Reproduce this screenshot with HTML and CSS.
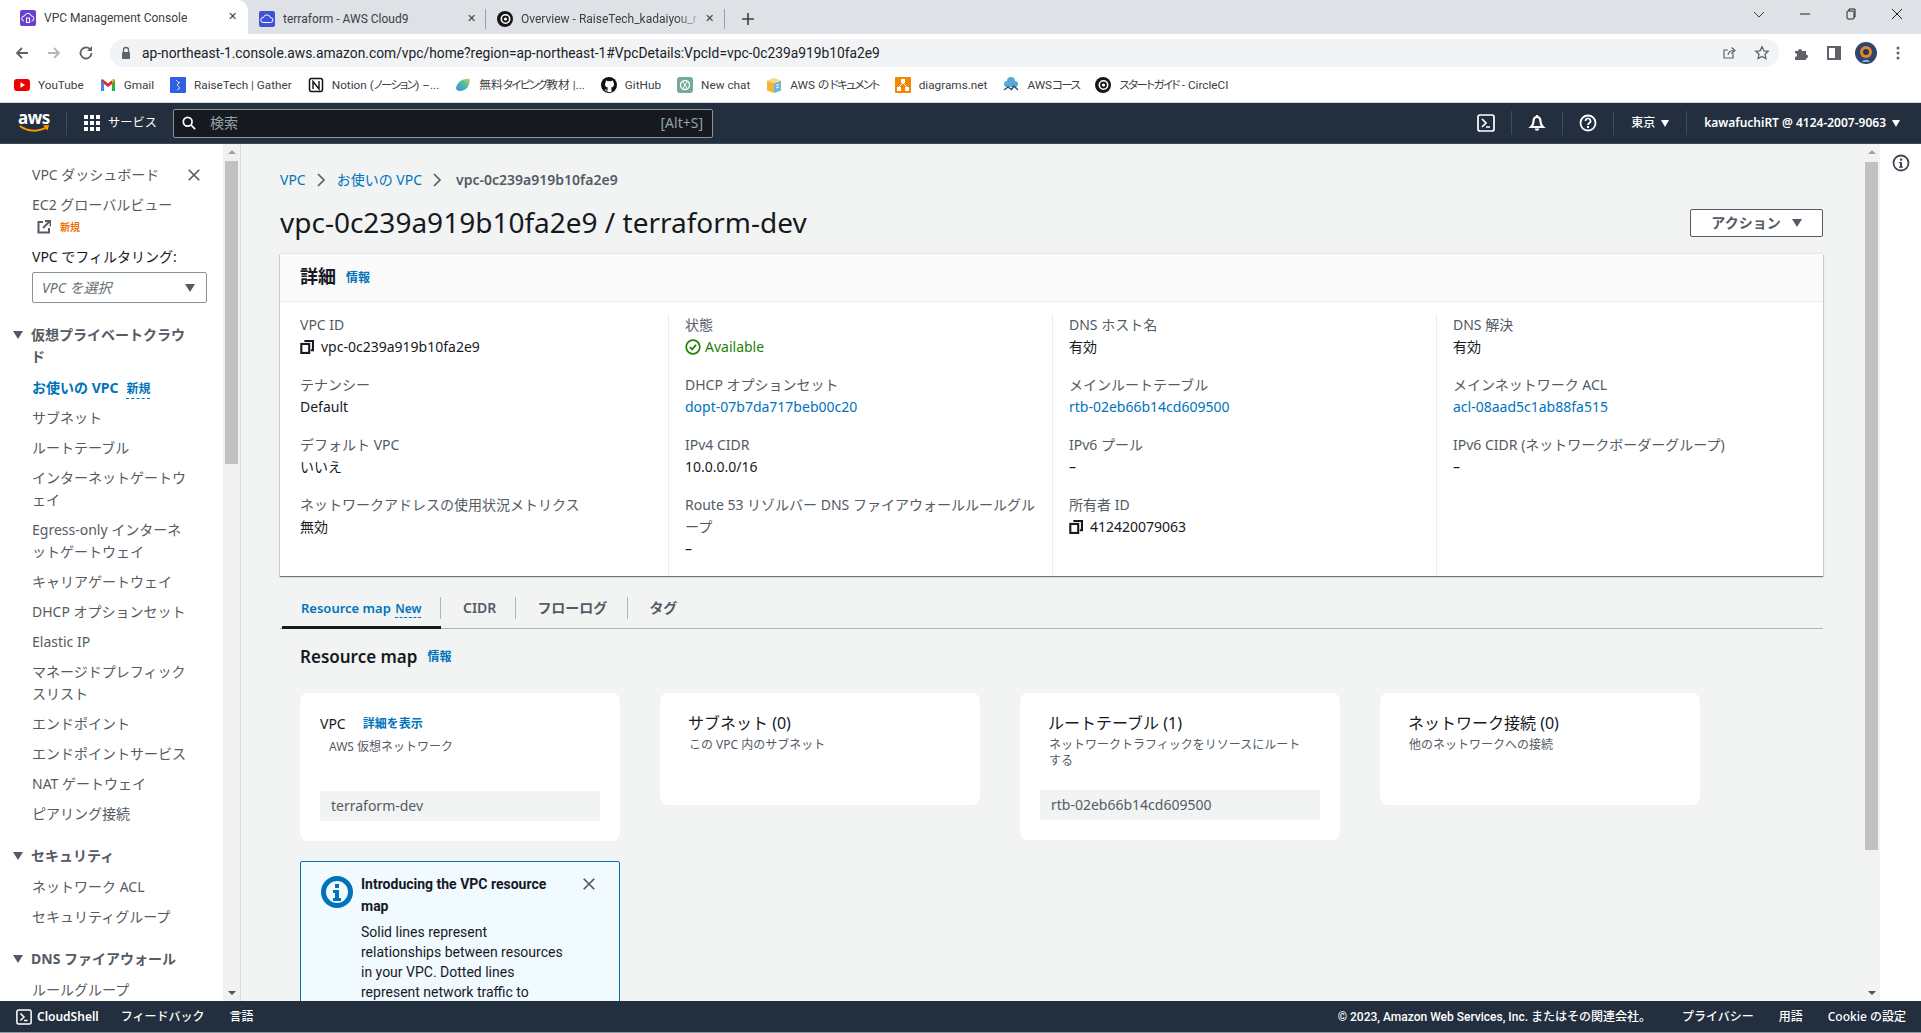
FILE: index.html
```html
<!DOCTYPE html>
<html lang="ja">
<head>
<meta charset="utf-8">
<title>VPC Management Console</title>
<link rel="stylesheet" href="styles.css">
</head>
<body>
<svg class="defs" width="0" height="0" aria-hidden="true">
  <symbol id="copy" viewBox="0 0 16 16"><path d="M5 1.200h9.800v10.500h-2.500" fill="none" stroke="currentColor" stroke-width="2.400"/><rect x="1.500" y="4.500" width="9" height="10.300" fill="none" stroke="currentColor" stroke-width="2.400"/></symbol>
  <symbol id="shell" viewBox="0 0 18 18"><rect x="1" y="1" width="16" height="16" rx="2" fill="none" stroke="currentColor" stroke-width="1.700"/><path d="M5 5l4 4-4 4M9 13h4" fill="none" stroke="currentColor" stroke-width="1.700"/></symbol>
  <symbol id="x" viewBox="0 0 16 16"><path d="M2 2l12 12M14 2L2 14" fill="none" stroke="currentColor" stroke-width="2"/></symbol>
</svg>
<div class="tabstrip">
  <div class="tab tab-active">
    <svg class="fav" viewBox="0 0 16 16"><rect width="16" height="16" rx="2" fill="#6a3fd0"/><path d="M4 11a2.500 2.500 0 0 1 .5-5 3.500 3.500 0 0 1 6.800 0 2.500 2.500 0 0 1 .2 5" fill="none" stroke="#fff"/><rect x="6.500" y="8" width="3" height="4.500" fill="none" stroke="#fff"/></svg>
    <span class="tab-title">VPC Management Console</span><span class="tab-x">✕</span>
  </div>
  <div class="tab tab-second">
    <svg class="fav" viewBox="0 0 16 16"><rect width="16" height="16" rx="2" fill="#3f51d6"/><path d="M4 11.500a2.500 2.500 0 0 1 .5-5 3.500 3.500 0 0 1 6.800 0 2.500 2.500 0 0 1 .2 5z" fill="none" stroke="#fff"/></svg>
    <span class="tab-title">terraform - AWS Cloud9</span><span class="tab-x">✕</span>
  </div>
  <div class="tab tab-third">
    <svg class="fav" viewBox="0 0 16 16"><circle cx="8" cy="8" r="8" fill="#161616"/><circle cx="8.500" cy="8" r="4.200" fill="none" stroke="#fff" stroke-width="1.600"/><circle cx="8.500" cy="8" r="1.600" fill="#fff"/></svg>
    <span class="tab-title tab-fade">Overview - RaiseTech_kadaiyou_r</span><span class="tab-x">✕</span>
  </div>
  <svg class="tab-plus" viewBox="0 0 14 14"><path d="M7 1v12M1 7h12" stroke="#3c4043" stroke-width="1.600"/></svg>
  <div class="winctl">
    <svg viewBox="0 0 12 12"><path d="M1 4l5 5 5-5" fill="none" stroke="#3c4043"/></svg>
    <svg viewBox="0 0 12 12"><path d="M1 6h10" stroke="#202124"/></svg>
    <svg viewBox="0 0 12 12"><rect x="2" y="3" width="7" height="8" rx="1" fill="none" stroke="#202124"/><path d="M4 3V1h6v8H9" fill="none" stroke="#202124"/></svg>
    <svg viewBox="0 0 12 12"><path d="M1 1l10 10M11 1L1 11" stroke="#202124"/></svg>
  </div>
</div>
<div class="toolbar">
  <svg class="tb-ic" viewBox="0 0 16 16"><path d="M14 8H3M8 3L3 8l5 5" fill="none" stroke="#5f6368" stroke-width="1.800"/></svg>
  <svg class="tb-ic" viewBox="0 0 16 16"><path d="M2 8h11M8 3l5 5-5 5" fill="none" stroke="#b4b7bb" stroke-width="1.800"/></svg>
  <svg class="tb-ic" viewBox="0 0 16 16"><path d="M13.500 8A5.500 5.500 0 1 1 12 4.200" fill="none" stroke="#5f6368" stroke-width="1.800"/><path d="M14 1v5H9z" fill="#5f6368"/></svg>
  <div class="urlbar">
    <svg class="lock" viewBox="0 0 12 14"><path d="M3.500 6V4a2.500 2.500 0 0 1 5 0v2" fill="none" stroke="#5f6368" stroke-width="1.300"/><rect x="2" y="6" width="8" height="7" rx="1" fill="#5f6368"/></svg>
    <span class="url">ap-northeast-1.console.aws.amazon.com/vpc/home?region=ap-northeast-1#VpcDetails:VpcId=vpc-0c239a919b10fa2e9</span>
    <svg class="url-ic" viewBox="0 0 16 16"><path d="M11 8.500V13H2V5h4M6 10c.5-3 2.500-4.500 6-4.500M9.500 2.500l3.500 3-3.500 3" fill="none" stroke="#5f6368" stroke-width="1.200"/></svg>
    <svg class="url-ic" viewBox="0 0 16 16"><path d="M8 1.800l1.900 4 4.300.5-3.200 3 .9 4.300L8 11.400l-3.900 2.200.9-4.300-3.200-3 4.300-.5z" fill="none" stroke="#5f6368" stroke-width="1.300"/></svg>
  </div>
  <div class="tb-right">
    <svg class="tb-ic16" viewBox="0 0 16 16"><path d="M1 6h3a2 2 0 1 1 4 0h4v3.500a2 2 0 1 1 0 4V15H1v-3a2 2 0 1 0 0-4z" fill="#5f6368"/></svg>
    <svg class="tb-ic16" viewBox="0 0 16 16"><rect x="2" y="2" width="12" height="12" fill="none" stroke="#5f6368" stroke-width="2"/><rect x="9" y="2" width="5" height="12" fill="#5f6368"/></svg>
    <svg class="avatar" viewBox="0 0 22 22"><circle cx="11" cy="11" r="11" fill="#31456b"/><circle cx="11" cy="10" r="6" fill="#e08a2e"/><circle cx="11" cy="10" r="3" fill="#2b3550"/><path d="M7 20c1-3 7-3 8 0" fill="#7fb2d8"/></svg>
    <svg class="tb-ic16" viewBox="0 0 16 16"><circle cx="8" cy="3" r="1.500" fill="#5f6368"/><circle cx="8" cy="8" r="1.500" fill="#5f6368"/><circle cx="8" cy="13" r="1.500" fill="#5f6368"/></svg>
  </div>
</div>
<div class="bookmarks">
  <span class="bm"><svg viewBox="0 0 16 16"><rect y="2" width="16" height="12" rx="3" fill="#e00"/><path d="M6.500 5.200l4.500 2.800-4.500 2.800z" fill="#fff"/></svg>YouTube</span>
  <span class="bm"><svg viewBox="0 0 16 16"><path d="M1 3v11h3V7l4 3 4-3v7h3V3l-1.500-1L8 6.500 2.500 2z" fill="#d93025"/><path d="M1 3v11h3V6z" fill="#4285f4"/><path d="M15 3v11h-3V6z" fill="#34a853"/><path d="M12 6V3l1.500-1L15 3z" fill="#fbbc04"/></svg>Gmail</span>
  <span class="bm"><svg viewBox="0 0 16 16"><rect width="16" height="16" rx="1" fill="#2f5fe3"/><path d="M6 3l3 3-2 2 3 3-3 2M10 5L7 8" fill="none" stroke="#cfe0ff"/></svg>RaiseTech | Gather</span>
  <span class="bm"><svg viewBox="0 0 16 16"><rect x="1.500" y="1.500" width="13" height="13" rx="2" fill="#fff" stroke="#111" stroke-width="1.500"/><path d="M5 12V4.500l6 7.500V4" fill="none" stroke="#111" stroke-width="1.400"/></svg><span>Notion (<span class="kana">ノーション</span>) –...</span></span>
  <span class="bm"><svg viewBox="0 0 16 16"><defs><linearGradient id="tp" x1="0" y1="1" x2="1" y2="0"><stop offset="0" stop-color="#3a8ede"/><stop offset=".6" stop-color="#4fc0a0"/><stop offset="1" stop-color="#e9c85a"/></linearGradient></defs><path d="M1 11C2 5 8 1 15 2c0 7-4 12-10 12-2 0-4-1-4-3z" fill="url(#tp)"/></svg><span>無料<span class="kana">タイピング</span>教材 |...</span></span>
  <span class="bm"><svg viewBox="0 0 16 16"><circle cx="8" cy="8" r="8" fill="#111"/><path d="M5.500 15v-2.500C3.500 13 3 11.500 2.500 11M10.500 15v-3c0-1-.5-1.500-.5-1.500 2-.2 3-1.200 3-3.200 0-1-.3-1.600-.8-2.100.1-.6 0-1.300-.2-1.700-.7 0-1.400.4-1.900.8a7 7 0 0 0-3.200 0C6.400 3.900 5.700 3.500 5 3.500c-.2.400-.3 1.100-.2 1.700-.5.500-.8 1.100-.8 2.100 0 2 1 3 3 3.200 0 0-.5.500-.5 1.500v3" fill="#fff"/></svg>GitHub</span>
  <span class="bm"><svg viewBox="0 0 16 16"><rect width="16" height="16" rx="3" fill="#74aa9c"/><circle cx="8" cy="8" r="4.500" fill="none" stroke="#fff" stroke-width="1.300"/><path d="M6 5l4 6M10 5l-4 6" stroke="#fff"/></svg>New chat</span>
  <span class="bm"><svg viewBox="0 0 16 16"><path d="M8 1l7 3v9.500L8 16l-7-2.500V4z" fill="#f3b33d"/><path d="M8 1l7 3-7 2.500L1 4z" fill="#fbd98b"/><path d="M8 6.500l7-2.500v9.500L8 16z" fill="#6db6e0"/><path d="M10 8.500l3-1M10 11l3-1" stroke="#fff"/></svg><span>AWS の<span class="kana">ドキュメント</span></span></span>
  <span class="bm"><svg viewBox="0 0 16 16"><rect width="16" height="16" rx="1" fill="#f08705"/><rect x="6" y="2" width="4" height="4" fill="#fff"/><rect x="2" y="10" width="4" height="4" fill="#fff"/><rect x="10" y="10" width="4" height="4" fill="#fff"/><path d="M8 6l-4 4M8 6l4 4" stroke="#fff"/></svg>diagrams.net</span>
  <span class="bm"><svg viewBox="0 0 16 16"><path d="M4 10a3 3 0 0 1 0-6 4 4 0 0 1 8 0 3 3 0 0 1 0 6z" fill="#5aa8d8"/><path d="M1 13l4-3 4 3M8 13l3-4 4 4" stroke="#1f4d78" stroke-width="1.400" fill="none"/></svg><span>AWS<span class="kana">コース</span></span></span>
  <span class="bm"><svg viewBox="0 0 16 16"><circle cx="8" cy="8" r="8" fill="#161616"/><circle cx="8.500" cy="8" r="4.200" fill="none" stroke="#fff" stroke-width="1.600"/><circle cx="8.500" cy="8" r="1.600" fill="#fff"/></svg><span><span class="kana">スタートガイド</span> - CircleCI</span></span>
</div>
<header class="topnav">
  <div class="aws-logo"><span class="aws-word">aws</span><svg viewBox="0 0 32 9"><path d="M2 1c8 6 19 6 27 1" fill="none" stroke="#f90" stroke-width="2"/><path d="M25 .5l6-.5-1.500 5.500z" fill="#f90"/></svg></div>
  <span class="nav-sep nav-sep-logo"></span>
  <svg class="grid-ic" viewBox="0 0 16 16" fill="#fff"><rect width="4" height="4"/><rect x="6" width="4" height="4"/><rect x="12" width="4" height="4"/><rect y="6" width="4" height="4"/><rect x="6" y="6" width="4" height="4"/><rect x="12" y="6" width="4" height="4"/><rect y="12" width="4" height="4"/><rect x="6" y="12" width="4" height="4"/><rect x="12" y="12" width="4" height="4"/></svg>
  <span class="services">サービス</span>
  <div class="search">
    <svg viewBox="0 0 16 16"><circle cx="6.500" cy="6.500" r="5" fill="none" stroke="#fff" stroke-width="2"/><path d="M10 10l5 5" stroke="#fff" stroke-width="2"/></svg>
    <span class="search-ph">検索</span><span class="search-key">[Alt+S]</span>
  </div>
  <div class="nav-right">
    <svg class="nav-ic nav-ic-shell"><use href="#shell"/></svg>
    <span class="nav-sep"></span>
    <svg class="nav-ic" viewBox="0 0 18 18"><path d="M9 1v2" stroke="#fff" stroke-width="2"/><path d="M9 3c-2.500 0-3.500 2-3.500 4.500 0 3-1.200 4.200-2.500 5.500h12c-1.300-1.300-2.500-2.500-2.500-5.500C12.500 5 11.500 3 9 3z" fill="none" stroke="#fff" stroke-width="2.200"/><path d="M6.800 14.500a2.200 2.200 0 0 0 4.400 0z" fill="#fff"/></svg>
    <span class="nav-sep"></span>
    <svg class="nav-ic" viewBox="0 0 18 18"><circle cx="9" cy="9" r="7.500" fill="none" stroke="#fff" stroke-width="1.800"/><path d="M6.500 7a2.500 2.500 0 1 1 3.500 2.300c-.7.400-1 .8-1 1.700" fill="none" stroke="#fff" stroke-width="1.700"/><rect x="8" y="12" width="2" height="2" fill="#fff"/></svg>
    <span class="nav-sep"></span>
    <span class="nav-region">東京<i class="caret-w"></i></span>
    <span class="nav-sep"></span>
    <span class="nav-user">kawafuchiRT @ 4124-2007-9063<i class="caret-w"></i></span>
  </div>
</header>
<div class="workspace">
  <aside class="sidebar">
    <nav class="sidenav">
      <div class="side-top"><a class="side-item">VPC ダッシュボード</a><svg class="side-close"><use href="#x"/></svg></div>
      <a class="side-item side-block">EC2 グローバルビュー<br><span class="ext-row"><svg viewBox="0 0 14 14"><path d="M6 2H1.500v10.500H12V8" fill="none" stroke="#545b64" stroke-width="2"/><path d="M6 8l6.500-6.500M8 1h5.500v5.500" fill="none" stroke="#545b64" stroke-width="1.800"/></svg><b class="new-orange">新規</b></span></a>
      <div class="filter-label">VPC でフィルタリング:</div>
      <div class="filter-select"><em>VPC を選択</em><i class="caret-g"></i></div>
      <div class="side-head side-head-first"><i class="caret-g caret-s"></i><span>仮想プライベートクラウ<br>ド</span></div>
      <a class="side-item side-sub side-first side-active">お使いの VPC<span class="new-blue">新規</span></a>
      <a class="side-item side-sub">サブネット</a>
      <a class="side-item side-sub">ルートテーブル</a>
      <a class="side-item side-sub">インターネットゲートウ<br>ェイ</a>
      <a class="side-item side-sub">Egress-only インターネ<br>ットゲートウェイ</a>
      <a class="side-item side-sub">キャリアゲートウェイ</a>
      <a class="side-item side-sub">DHCP オプションセット</a>
      <a class="side-item side-sub">Elastic IP</a>
      <a class="side-item side-sub">マネージドプレフィック<br>スリスト</a>
      <a class="side-item side-sub">エンドポイント</a>
      <a class="side-item side-sub">エンドポイントサービス</a>
      <a class="side-item side-sub">NAT ゲートウェイ</a>
      <a class="side-item side-sub">ピアリング接続</a>
      <div class="side-head"><i class="caret-g caret-s"></i><span>セキュリティ</span></div>
      <a class="side-item side-sub side-first">ネットワーク ACL</a>
      <a class="side-item side-sub">セキュリティグループ</a>
      <div class="side-head"><i class="caret-g caret-s"></i><span>DNS ファイアウォール</span></div>
      <a class="side-item side-sub side-first">ルールグループ</a>
    </nav>
    <div class="scrollbar scrollbar-side"><i class="sb-up"></i><i class="sb-thumb sb-thumb-side"></i><i class="sb-gap"></i><i class="sb-down"></i></div>
  </aside>
  <main class="main">
    <div class="content">
      <div class="crumbs">
        <a class="link">VPC</a>
        <svg viewBox="0 0 10 16"><path d="M2 2l6 6-6 6" fill="none" stroke="#545b64" stroke-width="1.600"/></svg>
        <a class="link">お使いの VPC</a>
        <svg viewBox="0 0 10 16"><path d="M2 2l6 6-6 6" fill="none" stroke="#545b64" stroke-width="1.600"/></svg>
        <span class="crumb-cur">vpc-0c239a919b10fa2e9</span>
      </div>
      <div class="page-head">
        <h1>vpc-0c239a919b10fa2e9 / terraform-dev</h1>
        <button class="action-btn">アクション<i class="caret-g"></i></button>
      </div>
      <section class="detail-card">
        <div class="detail-head"><h2>詳細</h2><a class="info">情報</a></div>
        <div class="detail-grid">
          <div class="col">
            <dl><dt>VPC ID</dt><dd class="with-ic"><svg class="copy-ic"><use href="#copy"/></svg>vpc-0c239a919b10fa2e9</dd></dl>
            <dl><dt>テナンシー</dt><dd>Default</dd></dl>
            <dl><dt>デフォルト VPC</dt><dd>いいえ</dd></dl>
            <dl><dt>ネットワークアドレスの使用状況メトリクス</dt><dd>無効</dd></dl>
          </div>
          <div class="col">
            <dl><dt>状態</dt><dd class="with-ic status-ok"><svg class="ok-ic" viewBox="0 0 16 16"><circle cx="8" cy="8" r="6.800" fill="none" stroke="#1d8102" stroke-width="1.700"/><path d="M4.800 8l2.300 2.400 4-4.500" fill="none" stroke="#1d8102" stroke-width="1.700"/></svg>Available</dd></dl>
            <dl><dt>DHCP オプションセット</dt><dd><a class="link">dopt-07b7da717beb00c20</a></dd></dl>
            <dl><dt>IPv4 CIDR</dt><dd>10.0.0.0/16</dd></dl>
            <dl><dt>Route 53 リゾルバー DNS ファイアウォールルールグル<br>ープ</dt><dd>–</dd></dl>
          </div>
          <div class="col">
            <dl><dt>DNS ホスト名</dt><dd>有効</dd></dl>
            <dl><dt>メインルートテーブル</dt><dd><a class="link">rtb-02eb66b14cd609500</a></dd></dl>
            <dl><dt>IPv6 プール</dt><dd>–</dd></dl>
            <dl><dt>所有者 ID</dt><dd class="with-ic"><svg class="copy-ic"><use href="#copy"/></svg>412420079063</dd></dl>
          </div>
          <div class="col">
            <dl><dt>DNS 解決</dt><dd>有効</dd></dl>
            <dl><dt>メインネットワーク ACL</dt><dd><a class="link">acl-08aad5c1ab88fa515</a></dd></dl>
            <dl><dt>IPv6 CIDR (ネットワークボーダーグループ)</dt><dd>–</dd></dl>
          </div>
        </div>
      </section>
      <div class="tabs">
        <a class="tabn tabn-active">Resource map <span class="new-tab">New</span></a>
        <a class="tabn">CIDR</a>
        <a class="tabn tabn-cjk">フローログ</a>
        <a class="tabn tabn-cjk">タグ</a>
      </div>
      <section class="rmap">
        <div class="rmap-head"><h3>Resource map</h3><a class="info">情報</a></div>
        <div class="rmap-grid">
          <div class="rm-card">
            <div class="rm-vpc"><span>VPC</span><a class="link rm-detail">詳細を表示</a></div>
            <p class="rm-sub rm-sub-vpc">AWS 仮想ネットワーク</p>
            <div class="rm-box rm-box-vpc">terraform-dev</div>
          </div>
          <div class="rm-card">
            <h4>サブネット (0)</h4>
            <p class="rm-sub">この VPC 内のサブネット</p>
          </div>
          <div class="rm-card">
            <h4>ルートテーブル (1)</h4>
            <p class="rm-sub">ネットワークトラフィックをリソースにルート<br>する</p>
            <div class="rm-box rm-box-rt">rtb-02eb66b14cd609500</div>
          </div>
          <div class="rm-card">
            <h4>ネットワーク接続 (0)</h4>
            <p class="rm-sub">他のネットワークへの接続</p>
          </div>
          <div class="alert">
            <svg class="alert-ic" viewBox="0 0 32 32"><circle cx="16" cy="16" r="13.500" fill="none" stroke="#0073bb" stroke-width="5"/><rect x="14" y="8" width="4" height="4" fill="#0073bb"/><path d="M12 14h6v8h2v3h-8v-3h2v-5h-2z" fill="#0073bb"/></svg>
            <div class="alert-body">
              <strong>Introducing the VPC resource map</strong>
              <p>Solid lines represent relationships between resources in your VPC. Dotted lines represent network traffic to</p>
            </div>
            <svg class="alert-x"><use href="#x"/></svg>
          </div>
        </div>
      </section>
    </div>
    <div class="scrollbar scrollbar-main"><i class="sb-up"></i><i class="sb-thumb sb-thumb-main"></i><i class="sb-gap"></i><i class="sb-down"></i></div>
  </main>
  <aside class="rightrail">
    <svg viewBox="0 0 18 18"><circle cx="9" cy="9" r="7.500" fill="none" stroke="#414750" stroke-width="1.800"/><rect x="8" y="4.500" width="2.200" height="2.200" fill="#414750"/><path d="M7 8h3v4.500h1v1.300H7v-1.300h1V9.300H7z" fill="#414750"/></svg>
  </aside>
</div>
<footer class="footer">
  <span class="foot-shell"><svg><use href="#shell"/></svg>CloudShell</span>
  <span class="foot-fb">フィードバック</span>
  <span class="foot-lang">言語</span>
  <span class="foot-copy">© 2023, Amazon Web Services, Inc. またはその関連会社。</span>
  <span class="foot-a">プライバシー</span>
  <span class="foot-a">用語</span>
  <span class="foot-a">Cookie の設定</span>
</footer>
</body>
</html>
```

FILE: styles.css
```css
* { box-sizing: border-box; }
html, body { margin: 0; padding: 0; }
body {
  width: 1921px; height: 1033px; overflow: hidden; display: flex; flex-direction: column;
  background: #fff; color: #16191f;
  font-family: "Noto Sans", "Noto Sans CJK JP", sans-serif; font-size: 14px; line-height: 22px;
}
.defs { position: absolute; }
i { display: block; font-style: normal; }
a { color: inherit; text-decoration: none; }
h1, h2, h3, h4, p, dl, dd { margin: 0; }

/* browser chrome */
.tabstrip { height: 34px; flex: none; background: #dee1e6; display: flex; align-items: center; font-family: Roboto, "Noto Sans CJK JP", sans-serif; font-size: 12px; color: #3c4043; }
.tab { height: 34px; display: flex; align-items: center; flex: none; position: relative; }
.fav { width: 16px; height: 16px; flex: none; margin-top: 2px; }
.tab-active { width: 248px; padding: 0 10px 0 20px; background: #fff; border-radius: 0 10px 0 0; }
.tab-second { width: 238px; padding: 0 8px 0 11px; border-right: 1px solid #9aa0a6; height: 20px; margin-top: 3px; }
.tab-third { width: 239px; padding: 0 9px 0 11px; border-right: 1px solid #9aa0a6; height: 20px; margin-top: 3px; }
.tab-second .fav, .tab-third .fav { margin-top: 0; }
.tab-title { margin-left: 8px; flex: 1; overflow: hidden; white-space: nowrap; padding-top: 2px; }
.tab-second .tab-title, .tab-third .tab-title { padding-top: 0; }
.tab-fade { -webkit-mask-image: linear-gradient(90deg, #000 85%, transparent); mask-image: linear-gradient(90deg, #000 85%, transparent); }
.tab-x { width: 12px; font-size: 11px; text-align: center; }
.tab-plus { width: 14px; height: 14px; margin: 3px 0 0 16px; }
.winctl { margin-left: auto; margin-right: 18px; display: flex; gap: 34px; align-self: flex-start; margin-top: 8px; }
.winctl svg { width: 12px; height: 12px; }
.toolbar { height: 37px; flex: none; background: #fff; display: flex; align-items: center; padding-left: 14px; gap: 16px; }
.tb-ic { width: 16px; height: 16px; flex: none; }
.urlbar { width: 1669px; height: 28px; border-radius: 14px; background: #f1f3f4; display: flex; align-items: center; padding: 0 9px 0 10px; }
.lock { width: 12px; height: 14px; flex: none; }
.url { margin-left: 10px; font-family: Roboto, sans-serif; font-size: 13.800px; color: #202124; white-space: nowrap; flex: 1; }
.url-ic { width: 16px; height: 16px; flex: none; margin-left: 16px; }
.tb-right { display: flex; align-items: center; gap: 16px; margin-left: -1px; }
.tb-ic16 { width: 16px; height: 16px; flex: none; }
.avatar { width: 22px; height: 22px; flex: none; margin: 0 -3px; }
.bookmarks { height: 32px; flex: none; background: #fff; border-bottom: 1px solid #d2d4d7; display: flex; align-items: center; padding: 0 0 3px 14px; gap: 16px; font-family: Roboto, "Noto Sans CJK JP", sans-serif; font-size: 11.750px; color: #3c4043; }
.bm { display: flex; align-items: center; gap: 8px; white-space: nowrap; }
.bm svg { width: 16px; height: 16px; flex: none; }
.kana { font-feature-settings: "palt"; font-size: 11.500px; letter-spacing: -1.600px; }

/* console top nav */
.topnav { height: 41px; flex: none; background: #232f3e; display: flex; align-items: center; color: #fff; border-bottom: 1px solid #3d4855; padding-left: 18px; }
.aws-logo { width: 32px; height: 30px; display: flex; flex-direction: column; align-items: center; }
.aws-word { font-size: 17px; line-height: 20px; font-weight: 700; letter-spacing: -.5px; }
.aws-logo svg { width: 32px; height: 9px; margin-top: -3px; }
.nav-sep { width: 1px; height: 24px; background: #414d5c; flex: none; }
.nav-sep-logo { margin-left: 16px; }
.grid-ic { width: 16px; height: 16px; margin-left: 17px; flex: none; }
.services { margin-left: 8px; font-size: 12.250px; }
.search { width: 540px; height: 29px; margin-left: 16px; background: #16191f; border: 1px solid #879596; border-radius: 2px; display: flex; align-items: center; padding: 0 9px 0 8px; }
.search svg { width: 14px; height: 14px; flex: none; }
.search-ph { margin-left: 14px; color: #95a5a6; flex: 1; }
.search-key { font-size: 14px; color: #95a5a6; }
.nav-right { margin-left: auto; display: flex; align-items: center; padding-right: 21px; font-size: 12px; font-weight: 500; }
.nav-ic { width: 18px; height: 18px; flex: none; margin: 0 16px; }
.nav-ic-shell { color: #fff; }
.nav-region { display: flex; align-items: center; padding: 0 17px; }
.nav-user { display: flex; align-items: center; padding-left: 17px; font-weight: 600; }
.caret-w { width: 0; height: 0; margin-left: 6px; border: 4.500px solid transparent; border-top: 7px solid #fff; border-bottom: 0; }

/* workspace */
.workspace { flex: 1; min-height: 0; display: flex; overflow: hidden; }
.sidebar { width: 241px; flex: none; display: flex; background: #f1f1f1; border-right: 1px solid #d5dbdb; }
.sidenav { width: 223px; flex: none; background: #fff; padding: 16px 0 0 12px; overflow: hidden; color: #545b64; }
.side-item { display: block; padding: 4px 0 4px 20px; }
.side-top { display: flex; align-items: center; }
.side-close { width: 14px; height: 14px; margin-left: 28px; color: #545b64; }
.ext-row { display: flex; align-items: center; padding-left: 5px; height: 22px; }
.ext-row svg { width: 14px; height: 14px; }
.new-orange { color: #ec7211; font-size: 10px; margin-left: 9px; font-weight: 700; }
.filter-label { margin: 4px 0 0 20px; color: #16191f; }
.filter-select { width: 175px; height: 31px; margin: 4px 0 0 20px; border: 1px solid #879596; border-radius: 2px; display: flex; align-items: center; justify-content: space-between; padding: 0 11px 0 9px; }
.filter-select em { color: #687078; font-style: italic; }
.caret-g { width: 0; height: 0; border: 5.500px solid transparent; border-top: 8px solid #545b64; border-bottom: 0; flex: none; }
.side-head { display: flex; margin-top: 16px; font-weight: 700; }
.side-head-first { margin-top: 21px; }
.caret-s { margin: 7px 8px 0 1px; }
.side-first { margin-top: 5px; }
.side-active { color: #0073bb; font-weight: 700; padding-bottom: 3px; }
.new-blue { font-size: 12px; margin-left: 8px; border-bottom: 1px dashed #0073bb; padding-bottom: 1px; }

.scrollbar { width: 17px; flex: none; display: flex; flex-direction: column; align-items: center; background: #f1f1f1; }
.sb-up { width: 0; height: 0; margin-top: 6px; border: 4px solid transparent; border-bottom: 4px solid #a3a3a3; border-top: 0; }
.sb-down { width: 0; height: 0; margin-bottom: 6px; border: 4px solid transparent; border-top: 4px solid #505050; border-bottom: 0; }
.sb-thumb { width: 13px; background: #c1c1c1; }
.sb-thumb-side { height: 303px; margin-top: 7px; }
.sb-thumb-main { height: 688px; margin-top: 8px; }
.sb-gap { flex: 1; }

.main { flex: 1; min-width: 0; display: flex; background: #f2f3f3; overflow: hidden; }
.content { width: 1622px; flex: none; padding: 25px 0 0 39px; overflow: hidden; }
.scrollbar-main { background: #f2f3f3; border-right: 1px solid #d5dbdb; width: 18px; }
.rightrail { width: 41px; flex: none; background: #fff; display: flex; justify-content: center; padding-top: 10px; }
.rightrail svg { width: 18px; height: 18px; }

.link { color: #0073bb; }
.info { color: #0073bb; font-size: 12px; font-weight: 700; }
.crumbs { display: flex; align-items: center; height: 22px; color: #545b64; }
.crumbs svg { width: 10px; height: 16px; margin: 0 11px 0 10px; }
.crumb-cur { font-weight: 600; margin-left: 3px; }
.page-head { width: 1543px; height: 36px; margin-top: 13px; display: flex; align-items: center; justify-content: space-between; }
h1 { font-size: 28px; line-height: 36px; font-weight: 400; white-space: nowrap; }
.action-btn { width: 133px; height: 28px; margin-top: 2px; background: #fff; border: 1px solid #545b64; border-radius: 2px; font: 700 14px/22px "Noto Sans", "Noto Sans CJK JP", sans-serif; color: #545b64; display: flex; align-items: center; justify-content: center; gap: 11px; padding: 0; }

.detail-card { width: 1543px; margin-top: 14px; background: #fff; box-shadow: 0 1px 1px 0 rgba(0,28,36,.45), 1px 1px 1px 0 rgba(0,28,36,.1), -1px 1px 1px 0 rgba(0,28,36,.1), 0 -1px 1px rgba(0,28,36,.06); padding-bottom: 16px; }
.detail-head { height: 48px; background: #fafafa; border-bottom: 1px solid #eaeded; display: flex; align-items: center; padding-left: 20px; gap: 10px; }
h2 { font-size: 18px; line-height: 24px; font-weight: 700; margin-top: -4px; }
.detail-grid { display: grid; grid-template-columns: repeat(4, 384px); margin: 12px 0 0 4px; height: 246px; }
.col { padding: 0 16px; }
.col + .col { border-left: 1px solid #eaeded; }
dl { margin-bottom: 16px; }
dt { color: #545b64; white-space: nowrap; }
.with-ic { display: flex; align-items: center; gap: 7px; }
.copy-ic { width: 14px; height: 14px; color: #16191f; flex: none; }
.ok-ic { width: 16px; height: 16px; flex: none; margin-right: -3px; }
.status-ok { color: #1d8102; }

.tabs { width: 1543px; margin-top: 16px; height: 37px; padding-top: 5px; border-bottom: 1px solid #aab7b8; display: flex; }
.tabn { height: 32px; padding: 0 20px 0 22px; font-weight: 600; color: #545b64; position: relative; }
.tabn-cjk { padding: 0 21px 0 21px; }
.tabn::after { content: ""; position: absolute; right: 0; top: 0; height: 22px; width: 1px; background: #aab7b8; }
.tabn:last-child::after { display: none; }
.tabn-active { margin-left: 2px; padding: 0 20px 0 19px; width: 159px; color: #0073bb; white-space: nowrap; border-bottom: 3px solid #16191f; font-size: 13px; }
.new-tab { font-size: 12px; border-bottom: 1px dashed #0073bb; margin-left: 1px; }

.rmap { width: 1543px; padding-left: 20px; }
.rmap-head { display: flex; align-items: center; gap: 10px; margin-top: 16px; height: 24px; }
h3 { font-size: 17px; line-height: 24px; font-weight: 600; }
.rmap-grid { margin-top: 24px; display: grid; grid-template-columns: repeat(4, 320px); gap: 20px 40px; align-items: start; }
.rm-card { min-height: 112px; background: #fff; border-radius: 8px; padding: 20px; }
.rm-vpc { display: flex; align-items: center; gap: 17px; }
.rm-detail { font-size: 12px; font-weight: 600; }
h4 { font-size: 16px; line-height: 22px; font-weight: 400; padding-left: 8px; margin-top: -1px; white-space: nowrap; }
.rm-sub { font-size: 12px; line-height: 16px; color: #545b64; padding-left: 9px; }
h4 + .rm-sub { margin-top: 3px; }
.rm-sub-vpc { margin-top: 4px; }
.rm-box { height: 30px; background: #f2f3f3; color: #545b64; padding: 0 11px; white-space: nowrap; display: flex; align-items: center; }
.rm-box-vpc { margin-top: 36px; }
.rm-box-rt { margin-top: 21px; }

.alert { height: 160px; background: #f1faff; border: 1px solid #0073bb; border-radius: 2px; display: flex; padding: 11px 18px 0 20px; }
.alert-ic { width: 32px; height: 32px; flex: none; margin-top: 3px; }
.alert-body { width: 205px; margin-left: 8px; font-family: Roboto, sans-serif; }
.alert-body strong { display: block; font-weight: 700; line-height: 22px; }
.alert-body p { margin-top: 5px; line-height: 20px; }
.alert-x { width: 14px; height: 14px; color: #545b64; flex: none; margin: 4px 0 0 16px; }

.footer { height: 32px; flex: none; background: #232f3e; border-bottom: 1px solid #8d9aa0; color: #fff; display: flex; align-items: center; font-size: 12px; font-weight: 500; padding: 0 15px 0 16px; }
.foot-shell { display: flex; align-items: center; font-weight: 600; gap: 5px; }
.foot-shell svg { width: 16px; height: 16px; }
.foot-fb { margin-left: 22px; }
.foot-lang { margin-left: 25px; }
.foot-copy { margin-left: auto; margin-right: 6px; font-family: Roboto, "Noto Sans CJK JP", sans-serif; }
.foot-a { margin-left: 25px; }
```
